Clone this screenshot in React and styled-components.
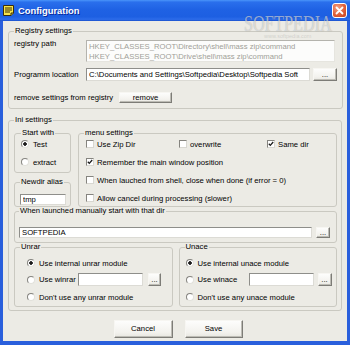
import React from "react";
import styled, { createGlobalStyle } from "styled-components";

const GlobalStyle = createGlobalStyle`
  html, body { margin: 0; padding: 0; }
  body {
    font-family: "Liberation Sans", Arial, sans-serif;
    font-size: 7.7px;
    color: #000;
  }
  * { box-sizing: border-box; }
`;

const Window = styled.div`
  position: relative;
  width: 350px;
  height: 345px;
  display: flex;
  flex-direction: column;
  overflow: hidden;
  background: #2a5fdc;
`;

const TitleBar = styled.div`
  height: 21px;
  flex: none;
  display: flex;
  align-items: center;
  padding: 0 3px;
  background: linear-gradient(180deg, #4a95fa 0%, #2a6fec 10%, #1f62e4 45%, #1d5fe2 80%, #2c6cea 92%, #1a50cc 100%);
`;

const Title = styled.span`
  margin-left: 4px;
  color: #fff;
  font-weight: bold;
  font-size: 9.4px;
  text-shadow: 1px 1px 0 #0b2a9a;
`;

const CloseButton = styled.div`
  margin-left: auto;
  width: 15px;
  height: 15px;
  border: 1px solid #fff;
  border-radius: 3px;
  background: radial-gradient(circle at 35% 30%, #f3a184 0%, #e0603a 55%, #c4421e 100%);
  display: flex;
  align-items: center;
  justify-content: center;
`;

const Body = styled.div`
  flex: 1;
  display: flex;
  flex-direction: column;
  background: #ecebe5;
  border: 3px solid #2a5fdc;
  border-top: 0;
  border-bottom-width: 4px;
  padding: 6px 4px 0 5px;
`;

const Group = styled.fieldset`
  margin: ${p => p.$margin || "0"};
  min-width: 0;
  border: 1px solid #cac9c1;
  border-radius: 3px;
  padding: ${p => p.$pad || "0"};
`;

const Legend = styled.legend`
  padding: 0 1px;
  margin-left: ${p => p.$shift || 0}px;
  line-height: 8px;
  font-size: 7.7px;
  color: #000;
`;

const RegistryGrid = styled.div`
  display: grid;
  grid-template-columns: 69px 1fr 24px;
  column-gap: 3px;
  row-gap: 6px;
  align-items: center;
`;

const FieldLabel = styled.span`
  line-height: 8px;
  align-self: ${p => (p.$top ? "start" : "center")};
`;

const PathBox = styled.div`
  grid-column: 2 / 4;
  margin-right: 2px;
  height: 22px;
  padding: 1px 2px 0;
  line-height: 10px;
  white-space: pre;
  overflow: hidden;
  color: #a09f98;
  background: #fcfcfb;
  border: 1px solid;
  border-color: #b4b3ad #e6e5df #e6e5df #b4b3ad;
`;

const TextInput = styled.input`
  display: block;
  width: ${p => (p.$w ? `${p.$w}px` : "100%")};
  min-width: 0;
  height: ${p => p.$h || 13}px;
  margin: 0 0 0 ${p => p.$ml || 0}px;
  padding: 0 2px;
  font: inherit;
  font-size: 7.7px;
  color: #000;
  background: #fff;
  border: 1px solid;
  border-color: #8e8e8a #dcdbd5 #dcdbd5 #8e8e8a;
  outline: none;
`;

const Button = styled.button`
  flex: none;
  width: ${p => p.$w}px;
  height: ${p => p.$h}px;
  margin: 0 0 0 ${p => p.$ml || 0}px;
  padding: 0;
  font-family: inherit;
  font-size: 7.7px;
  line-height: 1;
  color: #000;
  background: linear-gradient(180deg, #fdfdfc 0%, #f3f2ee 70%, #e8e7e1 100%);
  border: 1px solid;
  border-color: #f7f6f2 #7d7c77 #7d7c77 #f7f6f2;
  box-shadow: inset -1px -1px 0 #bdbcb5;
  cursor: default;
`;

const RemoveRow = styled.div`
  display: flex;
  align-items: center;
  margin-top: 11px;
`;

const TopGrid = styled.div`
  display: grid;
  grid-template-columns: 57px 1fr;
  column-gap: 7px;
`;

const Column = styled.div`
  display: flex;
  flex-direction: column;
  gap: 5px;
`;

const Options = styled.div`
  display: flex;
  flex-direction: column;
  gap: ${p => p.$gap || 6}px;
`;

const Option = styled.label`
  display: flex;
  align-items: center;
  gap: ${p => p.$gap || 4}px;
  height: ${p => p.$h || 12}px;
  margin-top: ${p => p.$mt || 0}px;
  white-space: nowrap;
`;

const OptionText = styled.span`
  flex: none;
  width: ${p => (p.$w ? `${p.$w}px` : "auto")};
`;

const Radio = styled.span`
  flex: none;
  width: 8px;
  height: 8px;
  border-radius: 50%;
  border: 1px solid;
  border-color: #85847f #e2e1db #e2e1db #85847f;
  background: ${p =>
    p.$on
      ? "radial-gradient(circle, #1b1b1b 0 1.5px, transparent 2px), #fff"
      : "#fff"};
`;

const Box = styled.span`
  flex: none;
  width: 8px;
  height: 8px;
  border: 1px solid;
  border-color: #85847f #d8d7d1 #d8d7d1 #85847f;
  background: #fff;
  display: flex;
`;

const MenuRow = styled.div`
  display: grid;
  grid-template-columns: 93px 88px auto;
  align-items: center;
  height: 12px;
`;

const DirRow = styled.div`
  display: flex;
  align-items: center;
  gap: 4px;
`;

const BottomGrid = styled.div`
  display: grid;
  grid-template-columns: 1fr 1fr;
  column-gap: 6px;
`;

const ButtonRow = styled.div`
  display: flex;
  justify-content: center;
  gap: 12px;
  margin-top: 9px;
  padding-left: 5px;
`;

const Watermark = styled.div`
  position: absolute;
  left: 244px;
  top: 15px;
  font-family: "Liberation Serif", serif;
  font-size: 24px;
  line-height: 17px;
  transform: scaleX(0.68);
  transform-origin: left top;
  color: rgba(255, 255, 255, 0.55);
  text-shadow: 0 0 1px rgba(0, 0, 0, 0.3);
  pointer-events: none;
`;

const WatermarkUrl = styled.div`
  position: absolute;
  left: 264px;
  top: 33px;
  font-size: 5.5px;
  line-height: 6px;
  color: rgba(150, 150, 150, 0.35);
  pointer-events: none;
`;

function Check({ on, children }) {
  return (
    <Option $gap={3}>
      <Box>
        {on && (
          <svg width="6" height="6" viewBox="0 0 6 6">
            <path d="M0.8 2.8 L2.3 4.4 L5.2 1" fill="none" stroke="#1b1b1b" strokeWidth="1.3" />
          </svg>
        )}
      </Box>
      <span>{children}</span>
    </Option>
  );
}

function AppIcon() {
  return (
    <svg width="11" height="11" viewBox="0 0 11 11">
      <path d="M0.5 0.5 H10.5 V8 L8 10.5 H0.5 Z" fill="#f7e44a" stroke="#3a2e08" />
      <path d="M2 3 H9 M2 5 H9 M2 7 H7" stroke="#3a2e08" strokeWidth="1" />
      <path d="M8 10.5 V8 H10.5" fill="#d9c030" stroke="#3a2e08" />
    </svg>
  );
}

export default function App() {
  return (
    <Window>
      <GlobalStyle />
      <TitleBar>
        <AppIcon />
        <Title>Configuration</Title>
        <CloseButton>
          <svg width="9" height="9" viewBox="0 0 9 9">
            <path d="M1.5 1.5 L7.5 7.5 M7.5 1.5 L1.5 7.5" stroke="#fff" strokeWidth="1.8" strokeLinecap="round" />
          </svg>
        </CloseButton>
      </TitleBar>

      <Body>
        <Group $pad="5px 5px 5px 5px">
          <Legend>Registry settings</Legend>
          <RegistryGrid>
            <FieldLabel $top>registry path</FieldLabel>
            <PathBox>
              {"HKEY_CLASSES_ROOT\\Directory\\shell\\mass zip\\command\nHKEY_CLASSES_ROOT\\Drive\\shell\\mass zip\\command"}
            </PathBox>
            <FieldLabel>Programm location</FieldLabel>
            <TextInput readOnly defaultValue="C:\Documents and Settings\Softpedia\Desktop\Softpedia Soft" />
            <Button $w={24} $h={13}>...</Button>
          </RegistryGrid>
          <RemoveRow>
            <OptionText $w={105}>remove settings from registry</OptionText>
            <Button $w={53} $h={11}>remove</Button>
          </RemoveRow>
        </Group>

        <Group $margin="7px 1px 0 0" $pad="5px 4px 3px 5px">
          <Legend>Ini settings</Legend>
          <TopGrid>
            <Column>
              <Group $pad="1px 4px 4px 6px">
                <Legend>Start with</Legend>
                <Options>
                  <Option><Radio $on /><span>Test</span></Option>
                  <Option><Radio /><span>extract</span></Option>
                </Options>
              </Group>
              <Group $pad="8px 4px 1px 5px">
                <Legend>Newdir alias</Legend>
                <TextInput readOnly defaultValue="tmp" $h={11} />
              </Group>
            </Column>
            <Group $pad="1px 6px 0 7px">
              <Legend $shift={-2}>menu settings</Legend>
              <Options>
                <MenuRow>
                  <Check>Use Zip Dir</Check>
                  <Check>overwrite</Check>
                  <Check on>Same dir</Check>
                </MenuRow>
                <Check on>Remember the main window position</Check>
                <Check>When lauched from shell, close when done (if error = 0)</Check>
                <Check>Allow cancel during processing (slower)</Check>
              </Options>
            </Group>
          </TopGrid>

          <Group $pad="12px 6px 4px 4px">
            <Legend>When launched manually start with that dir</Legend>
            <DirRow>
              <TextInput readOnly defaultValue="SOFTPEDIA" $h={11} />
              <Button $w={14} $h={11}>...</Button>
            </DirRow>
          </Group>

          <BottomGrid>
            <Group $pad="6px 4px 3px 12px">
              <Legend $shift={-7}>Unrar</Legend>
              <Options $gap={4}>
                <Option><Radio $on /><span>Use internal unrar module</span></Option>
                <Option $h={13}>
                  <Radio />
                  <OptionText $w={37}>Use winrar</OptionText>
                  <TextInput readOnly defaultValue="" $w={65} $ml={-2} />
                  <Button $w={13} $h={13} $ml={1}>...</Button>
                </Option>
                <Option $mt={1}><Radio /><span>Don't use any unrar module</span></Option>
              </Options>
            </Group>
            <Group $pad="6px 4px 3px 6px">
              <Legend $shift={-1}>Unace</Legend>
              <Options $gap={4}>
                <Option><Radio $on /><span>Use internal unace module</span></Option>
                <Option $h={13}>
                  <Radio />
                  <OptionText $w={49}>Use winace</OptionText>
                  <TextInput readOnly defaultValue="" $w={65} $ml={-2} />
                  <Button $w={14} $h={13}>...</Button>
                </Option>
                <Option $mt={1}><Radio /><span>Don't use any unace module</span></Option>
              </Options>
            </Group>
          </BottomGrid>
        </Group>

        <ButtonRow>
          <Button $w={59} $h={18}>Cancel</Button>
          <Button $w={58} $h={18}>Save</Button>
        </ButtonRow>
      </Body>

      <Watermark>SOFTPEDIA</Watermark>
      <WatermarkUrl>www.softpedia.com</WatermarkUrl>
    </Window>
  );
}
